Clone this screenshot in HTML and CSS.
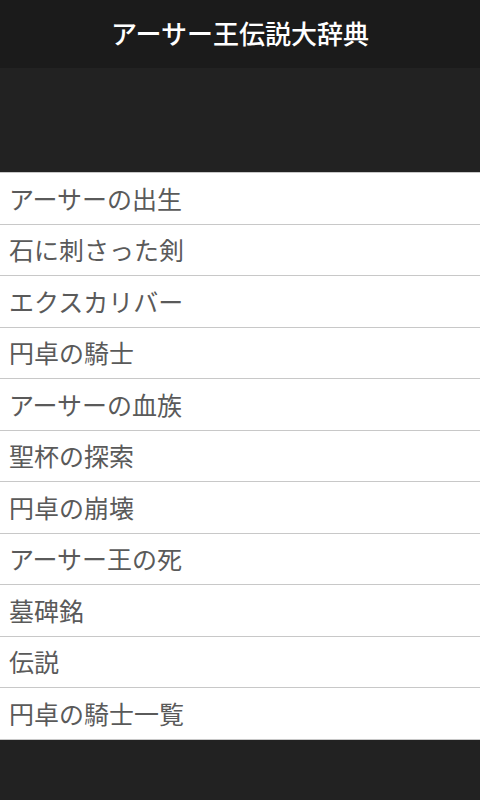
FILE: index.html
```html
<!DOCTYPE html>
<html lang="ja">
<head>
  <meta charset="UTF-8">
  <meta name="viewport" content="width=device-width, initial-scale=1.0">
  <title>アーサー王伝説大辞典</title>
  <link rel="stylesheet" href="styles.css">
</head>
<body>

<div class="header">
  <h1 class="title">アーサー王伝説大辞典</h1>
</div>

<!-- empty banner area -->
<div class="banner"></div>

<ul class="menu">
  <li>アーサーの出生</li>
  <li>石に刺さった剣</li>
  <li>エクスカリバー</li>
  <li>円卓の騎士</li>
  <li>アーサーの血族</li>
  <li>聖杯の探索</li>
  <li>円卓の崩壊</li>
  <li>アーサー王の死</li>
  <li>墓碑銘</li>
  <li>伝説</li>
  <li>円卓の騎士一覧</li>
</ul>

</body>
</html>
```

FILE: styles.css
```css
html, body {
  height: 100%;
}
body {
  margin: 0;
  background-color: #222222;
  font-family: "Noto Sans CJK JP", "Noto Sans", sans-serif;
}
.header {
  height: 68px;
  background-color: #1b1b1b;
  display: flex;
  align-items: center;
  justify-content: center;
}
.title {
  margin: 0 0 4px;
  color: #ffffff;
  font-size: 26px;
  font-weight: 500;
}
.banner {
  height: 104px;
  background-color: #222222;
}
.menu {
  list-style: none;
  margin: 0;
  padding: 0;
  background-color: #ffffff;
  border-bottom: 1px solid #c8c8c8;
}
.menu li {
  height: 50.5px;
  box-sizing: content-box;
  border-top: 1px solid #c8c8c8;
  padding-left: 9px;
  display: flex;
  align-items: center;
  font-size: 25px;
  line-height: 1;
  color: #5a5a5a;
}
```
